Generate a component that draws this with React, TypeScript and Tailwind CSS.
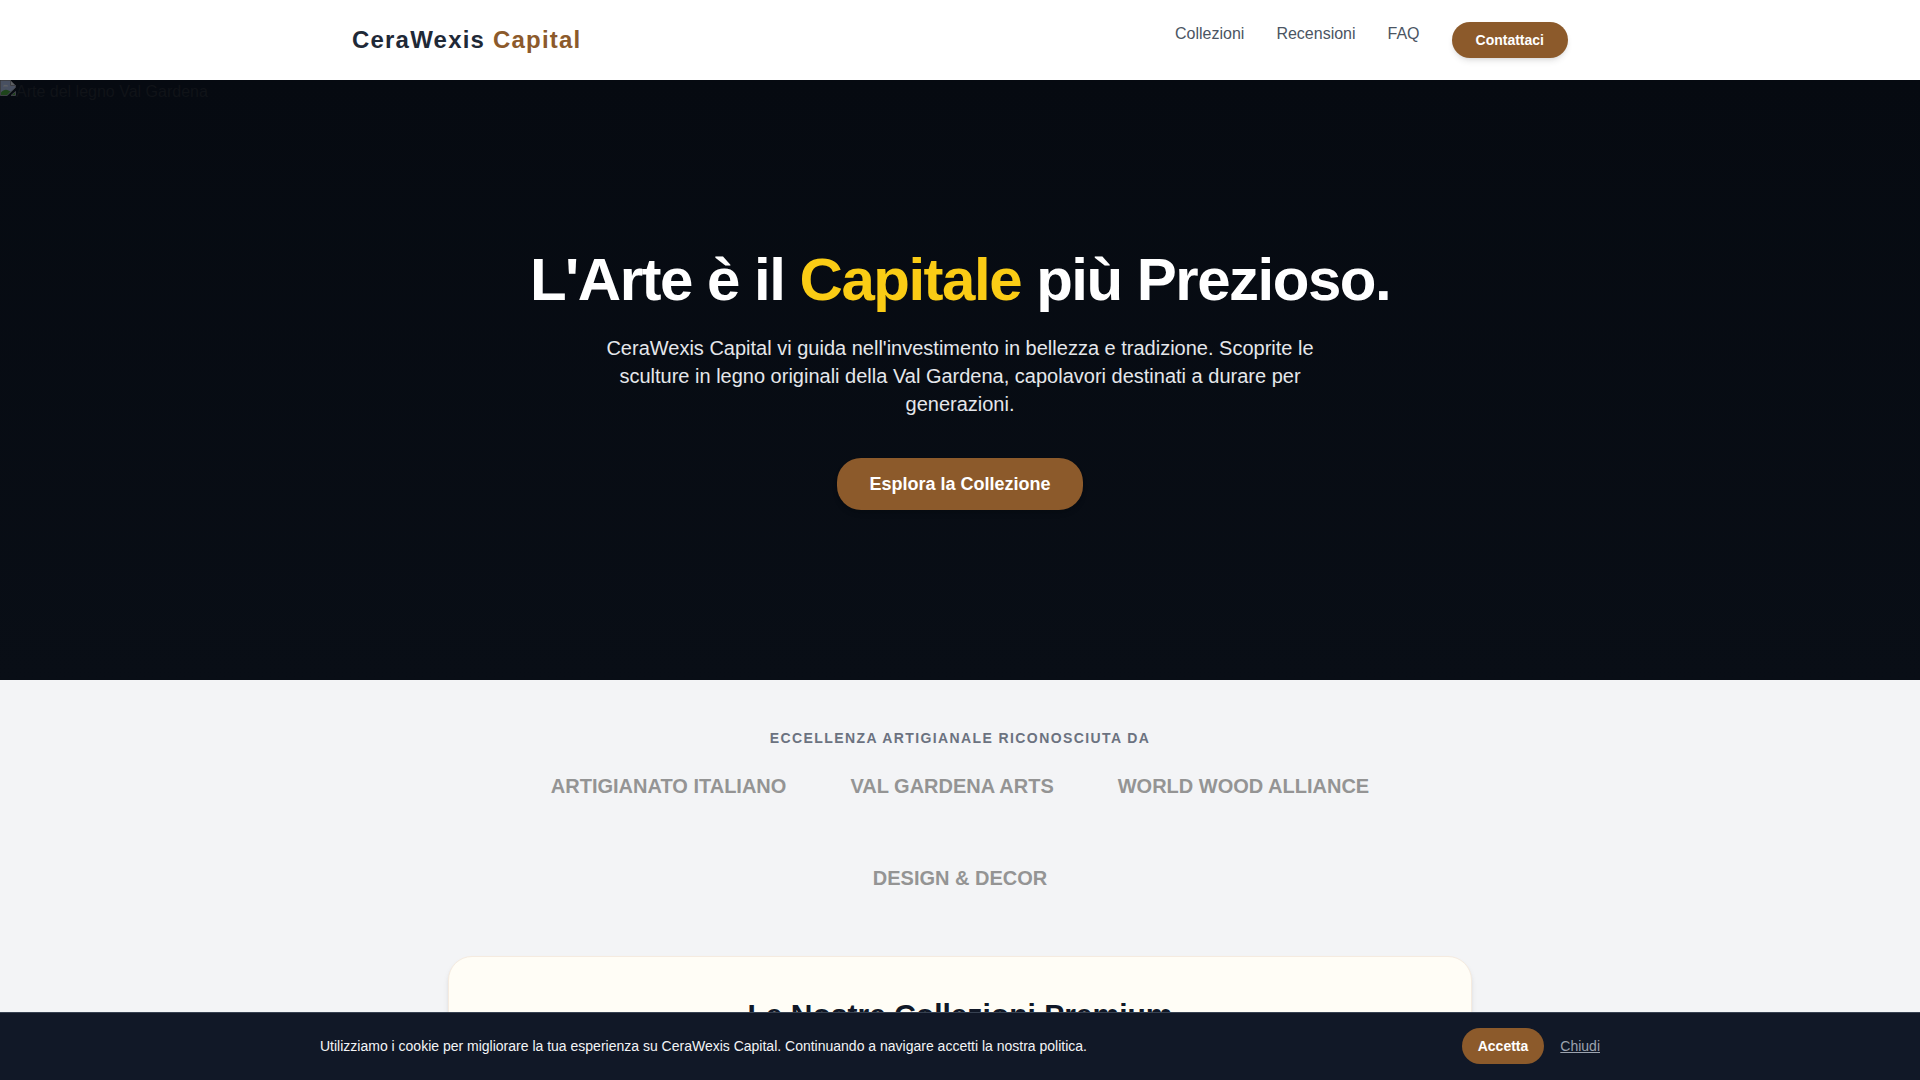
import React, { useState } from 'react';

const navLinks = [
  { label: 'Collezioni', href: '#collezioni' },
  { label: 'Recensioni', href: '#recensioni' },
  { label: 'FAQ', href: '#faq' },
];

const partners = [
  'ARTIGIANATO ITALIANO',
  'VAL GARDENA ARTS',
  'WORLD WOOD ALLIANCE',
  'DESIGN & DECOR',
];

const Header: React.FC = () => (
  <header className="bg-white">
    <div className="mx-auto flex h-20 max-w-7xl items-center justify-between px-8">
      <a href="#" className="text-2xl font-bold tracking-wider text-[#1f2937]">
        CeraWexis <span className="text-[#8c5a2b]">Capital</span>
      </a>
      <nav className="flex items-start gap-8">
        {navLinks.map((link) => (
          <a key={link.href} href={link.href} className="text-base text-[#4b5563] hover:text-[#8c5a2b]">
            {link.label}
          </a>
        ))}
        <a
          href="#contatti"
          className="rounded-full bg-[#8c5a2b] px-6 py-2 text-sm font-bold text-white shadow-md hover:bg-[#7a4d25]"
        >
          Contattaci
        </a>
      </nav>
    </div>
  </header>
);

const ImagePlaceholder: React.FC = () => (
  <svg viewBox="0 0 16 16" className="h-4 w-4 shrink-0" aria-hidden="true">
    <path d="M0.5 0.5H10.5L15.5 5.5V7.5L7 15.5H0.5Z" fill="#c2d3f5" stroke="#a3a3a3" />
    <path d="M10.5 0.5V5.5H15.5Z" fill="#fff" stroke="#a3a3a3" />
    <path d="M3 6.5a2 2 0 0 1 3-1.5a1.5 1.5 0 0 1 2 1.5Z" fill="#fff" />
    <path d="M1 15V12.5C3 10 6 9 8.5 10.5L10.5 11.5L7 15Z" fill="#4caf2f" />
    <path d="M11 15.5L15.5 11.5V15.5Z" fill="#4caf2f" stroke="#a3a3a3" />
  </svg>
);

const Hero: React.FC = () => (
  <section className="relative flex min-h-[600px] items-center justify-center bg-linear-to-b from-[#060a11] to-[#090e16] px-8">
    <div className="absolute top-0 left-0 flex items-start">
      <span className="opacity-35">
        <ImagePlaceholder />
      </span>
      <span className="text-base text-[#101318]">Arte del legno Val Gardena</span>
    </div>
    <div className="flex flex-col items-center text-center">
      <h1 className="mb-6 text-6xl leading-none font-bold tracking-tight text-white">
        L'Arte è il <span className="text-[#facc15]">Capitale</span> più Prezioso.
      </h1>
      <p className="mb-10 max-w-3xl text-xl text-[#e5e7eb]">
        CeraWexis Capital vi guida nell'investimento in bellezza e tradizione. Scoprite le sculture in legno
        originali della Val Gardena, capolavori destinati a durare per generazioni.
      </p>
      <a
        href="#collezioni"
        className="rounded-3xl bg-[#8c5a2b] px-8 py-3 text-lg font-bold text-white shadow-md hover:bg-[#7a4d25]"
      >
        Esplora la Collezione
      </a>
    </div>
  </section>
);

const Partners: React.FC = () => (
  <section className="py-12 text-center">
    <h2 className="mb-6 text-sm font-bold tracking-widest text-[#6b7280] uppercase">
      Eccellenza artigianale riconosciuta da
    </h2>
    <ul className="mx-auto flex max-w-5xl flex-wrap justify-center gap-16">
      {partners.map((name) => (
        <li key={name} className="text-xl font-bold text-[#949494]">
          {name}
        </li>
      ))}
    </ul>
  </section>
);

const Collections: React.FC = () => (
  <section
    id="collezioni"
    className="mx-auto mt-4 max-w-5xl rounded-3xl border border-[#f5ebe0] bg-[#fffdf6] px-8 pt-10 pb-24 shadow-md"
  >
    <h2 className="text-center text-3xl font-bold text-[#111827]">Le Nostre Collezioni Premium</h2>
  </section>
);

const CookieBar: React.FC<{ onClose: () => void }> = ({ onClose }) => (
  <div className="fixed inset-x-0 bottom-0 z-50 border-t border-[#374151] bg-[#111827] pt-[15px] pb-4">
    <div className="mx-auto flex max-w-7xl items-center justify-between">
      <p className="text-sm text-[#f3f4f6]">
        Utilizziamo i cookie per migliorare la tua esperienza su CeraWexis Capital. Continuando a navigare accetti
        la nostra politica.
      </p>
      <div className="flex items-center gap-4">
        <button
          onClick={onClose}
          className="rounded-full bg-[#8c5a2b] px-4 py-2 text-sm font-bold text-white hover:bg-[#7a4d25]"
        >
          Accetta
        </button>
        <button onClick={onClose} className="text-sm text-[#9ca3af] underline hover:text-white">
          Chiudi
        </button>
      </div>
    </div>
  </div>
);

const App: React.FC = () => {
  const [showCookies, setShowCookies] = useState(true);

  return (
    <div className="min-h-screen bg-[#f3f4f6] font-['Liberation_Sans',Arial,sans-serif]">
      <Header />
      <main>
        <Hero />
        <Partners />
        <Collections />
      </main>
      {showCookies && <CookieBar onClose={() => setShowCookies(false)} />}
    </div>
  );
};

export default App;
